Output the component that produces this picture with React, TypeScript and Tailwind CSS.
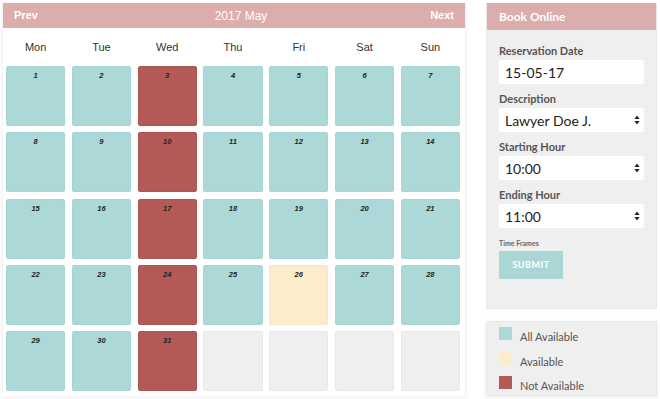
import React from "react";

type Status = "all" | "some" | "none" | "empty";

interface Day {
  n: number | null;
  status: Status;
}

const dayNames = ["Mon", "Tue", "Wed", "Thu", "Fri", "Sat", "Sun"];

const days: Day[] = Array.from({ length: 35 }, (_, i) => {
  const n = i + 1;
  if (n > 31) return { n: null, status: "empty" };
  if (n % 7 === 3) return { n, status: "none" };
  if (n === 26) return { n, status: "some" };
  return { n, status: "all" };
});

const cellColor: Record<Status, string> = {
  all: "bg-[#acd8d8] border-[#a7d4d4]",
  some: "bg-[#fdeccc] border-[#f7e6c6]",
  none: "bg-[#b35a57] border-[#ad5552]",
  empty: "bg-[#efefef] border-[#e8e8e8]",
};

function SelectArrows() {
  return (
    <svg width="6" height="10" viewBox="0 0 6 10" className="shrink-0">
      <path d="M3 0.5 L5.6 4 H0.4 Z" fill="#222" />
      <path d="M3 9.5 L5.6 6 H0.4 Z" fill="#222" />
    </svg>
  );
}

function Field({ label, value, select, first }: { label: string; value: string; select?: boolean; first?: boolean }) {
  return (
    <div className={first ? "" : "mt-[8px]"}>
      <p className="text-[11px] leading-[14px] font-bold text-[#555] mb-[2px]">{label}</p>
      <div className="h-[24px] bg-white rounded-[3px] flex items-center justify-between pl-[6px] pr-[4px] text-[14px] text-[#222]">
        <span>{value}</span>
        {select && <SelectArrows />}
      </div>
    </div>
  );
}

export default function App() {
  return (
    <div className="w-[660px] h-[399px] bg-white flex overflow-hidden font-['Liberation_Sans',Arial,sans-serif]">
      <div className="ml-[2px] mt-[3px] w-[464px] h-[393px] border-x border-[#f3f3f3] shadow-[0_2px_4px_rgba(0,0,0,0.06)]">
        <div className="h-[25px] bg-[#dcadad] flex items-center justify-between px-[11px] text-white">
          <span className="text-[11px] font-bold">Prev</span>
          <span className="text-[12px] pl-[14px]">2017 May</span>
          <span className="text-[11px] font-bold">Next</span>
        </div>
        <div className="grid grid-cols-7 gap-x-[6.6px] pl-[3px] pr-[5px] h-[38px] items-center text-[11px] text-[#333]">
          {dayNames.map((d) => (
            <div key={d} className="text-center">
              {d}
            </div>
          ))}
        </div>
        <div className="grid grid-cols-7 gap-x-[6.6px] gap-y-[6.25px] pl-[3px] pr-[5px]">
          {days.map((d, i) => (
            <div
              key={i}
              className={`h-[60px] rounded-[2px] border ${cellColor[d.status]} flex justify-center pt-[3px]`}
            >
              {d.n !== null && (
                <span className="text-[7.5px] font-bold italic text-[#222]">{d.n}</span>
              )}
            </div>
          ))}
        </div>
      </div>

      <div className="ml-[20px] mt-[3px] w-[171px] flex flex-col font-['Lato',sans-serif]">
        <div className="bg-[#efefef] border border-[#e8e8e8] border-t-0">
          <div className="h-[27px] bg-[#dcadad] flex items-center px-[12px] text-white text-[12px] font-bold">
            Book Online
          </div>
          <div className="px-[12px] pt-[14px] pb-[29px]">
            <Field label="Reservation Date" value="15-05-17" first />
            <Field label="Description" value="Lawyer Doe J." select />
            <Field label="Starting Hour" value="10:00" select />
            <Field label="Ending Hour" value="11:00" select />
            <p className="mt-[10px] text-[7px] leading-[10px] font-bold text-[#666]">Time Frames</p>
            <button className="mt-[3px] w-[64px] h-[28px] bg-[#aad7d5] text-white text-[9px] font-bold tracking-[0.5px]">
              SUBMIT
            </button>
          </div>
        </div>
        <div className="mt-[12px] h-[75px] bg-[#efefef] border border-[#e8e8e8] shadow-[0_2px_6px_rgba(0,0,0,0.08)] px-[12px] pt-[5px] flex flex-col gap-[8.5px]">
          {[
            ["bg-[#acd8d8]", "All Available"],
            ["bg-[#fdeccc]", "Available"],
            ["bg-[#b35a57]", "Not Available"],
          ].map(([c, t]) => (
            <div key={t} className="flex items-start gap-[8px]">
              <span className={`w-[13px] h-[13px] shrink-0 ${c}`} />
              <span className="text-[11px] leading-[13px] text-[#555] pt-[3px]">{t}</span>
            </div>
          ))}
        </div>
      </div>
    </div>
  );
}
